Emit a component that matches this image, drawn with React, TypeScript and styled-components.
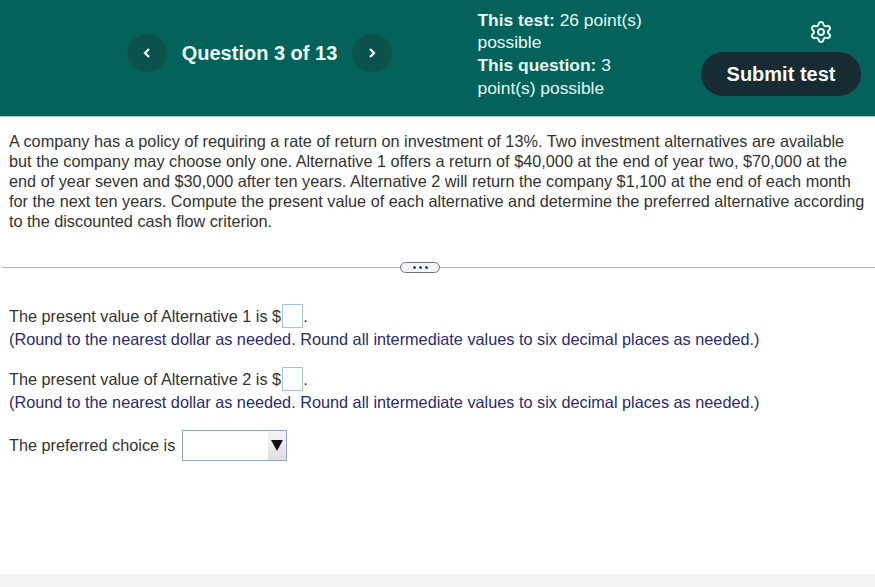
import React from "react";
import styled, { createGlobalStyle } from "styled-components";
import { Settings } from "lucide-react";

const Global = createGlobalStyle`
  html, body { margin: 0; padding: 0; background: #fff; }
  body { font-family: "Liberation Sans", Arial, sans-serif; }
`;
const Page = styled.div`
  width: 875px; height: 587px; position: relative; overflow: hidden;
  display: flex; flex-direction: column; background: #fff;
`;
const Header = styled.header`
  height: 116px; flex: none; background: #03635a; color: #fff;
  border-bottom: 1px solid #9fc9c3; box-sizing: content-box;
  display: flex; align-items: flex-start;
`;
const Nav = styled.div`
  display: flex; align-items: center; margin: 34px 0 0 127px; width: 350.5px;
`;
const RoundBtn = styled.div`
  width: 40px; height: 38px; border-radius: 50%; background: #0c524c; color: #eefaf7;
  display: flex; align-items: center; justify-content: center; flex: none;
`;
const NavTitle = styled.div`
  font-size: 20px; font-weight: 700; color: #eafaf7; width: 185px; text-align: center; white-space: nowrap;
  padding-top: 1px;
`;
const Points = styled.div`
  margin-top: 8.5px; width: 190px; font-size: 17.4px; line-height: 22.7px; color: #e6f8f4;
  b { font-weight: 700; }
`;
const Right = styled.div`
  margin-left: 33.5px; width: 160px; display: flex; flex-direction: column; align-items: flex-end;
`;
const Gear = styled.div`
  margin: 20px 28px 0 0; height: 24px; color: #e8f8f5; display: flex;
`;
const Submit = styled.div`
  margin-top: 8px; width: 160px; height: 44px; border-radius: 22px; background: #172b33; color: #f5f8f8;
  font-size: 20px; font-weight: 700; display: flex; align-items: center; justify-content: center;
`;
const Prompt = styled.p`
  margin: 14px 0 0 9px; width: 862px; font-size: 16.28px; line-height: 20.1px; color: #333;
`;
const Divider = styled.div`
  position: relative; margin-top: 35.5px; margin-left: 2px; height: 1px; background: #b4b4b4;
`;
const Dots = styled.div`
  position: absolute; left: 398px; top: -5px; width: 40px; height: 11px; box-sizing: border-box;
  border: 1px solid #6f7478; border-radius: 6px; background: #f2f4f8;
  display: flex; align-items: center; justify-content: center; gap: 3px;
  i { width: 3px; height: 3px; background: #3f4650; border-radius: 50%; display: block; }
`;
const Answers = styled.div`
  margin: 36.5px 0 0 9px; display: flex; flex-direction: column;
`;
const Block = styled.div`
  display: flex; flex-direction: column; margin-bottom: 16px;
`;
const Line = styled.div`
  display: flex; align-items: center; height: 24px; font-size: 16.28px; color: #333; white-space: nowrap;
`;
const Note = styled.div`
  height: 23px; line-height: 23px; font-size: 16.28px; color: #2a2b70; white-space: nowrap;
`;
const Box = styled.span`
  display: inline-block; width: 21px; height: 24px; box-sizing: border-box; margin-left: 1px;
  border: 1px solid #a9c3dc; background: #fff;
`;
const SelectLine = styled(Line)`
  height: 32px; margin-top: -1px;
`;
const Select = styled.div`
  width: 105px; height: 31px; margin-left: 7px; box-sizing: border-box; border: 1px solid #8ea6cf;
  display: flex; justify-content: flex-end; background: #fff;
`;
const Arrow = styled.div`
  width: 18px; background: linear-gradient(#f6f6f6, #dedede); display: flex; align-items: center; justify-content: center;
`;
const Footer = styled.div`
  position: absolute; left: 0; right: 0; bottom: 0; height: 13px; background: #f3f3f3;
`;

export default function App() {
  return (
    <Page>
      <Global />
      <Header>
        <Nav>
          <RoundBtn>
            <svg width="10" height="12" viewBox="0 0 10 12" fill="none" stroke="currentColor" strokeWidth="2.2"><path d="M7 2 L3 6 L7 10" /></svg>
          </RoundBtn>
          <NavTitle>Question 3 of 13</NavTitle>
          <RoundBtn>
            <svg width="10" height="12" viewBox="0 0 10 12" fill="none" stroke="currentColor" strokeWidth="2.2"><path d="M3 2 L7 6 L3 10" /></svg>
          </RoundBtn>
        </Nav>
        <Points>
          <b>This test:</b> 26 point(s)<br />
          possible<br />
          <b>This question:</b> 3<br />
          point(s) possible
        </Points>
        <Right>
          <Gear>
            <Settings size={24} strokeWidth={2} />
          </Gear>
          <Submit>Submit test</Submit>
        </Right>
      </Header>
      <Prompt>
        A company has a policy of requiring a rate of return on investment of 13%. Two investment alternatives are available but the company may choose only one. Alternative 1 offers a return of $40,000 at the end of year two, $70,000 at the end of year seven and $30,000 after ten years. Alternative 2 will return the company $1,100 at the end of each month for the next ten years. Compute the present value of each alternative and determine the preferred alternative according to the discounted cash flow criterion.
      </Prompt>
      <Divider>
        <Dots><i /><i /><i /></Dots>
      </Divider>
      <Answers>
        <Block>
          <Line>The present value of Alternative 1 is $<Box />.</Line>
          <Note>(Round to the nearest dollar as needed. Round all intermediate values to six decimal places as needed.)</Note>
        </Block>
        <Block>
          <Line>The present value of Alternative 2 is $<Box />.</Line>
          <Note>(Round to the nearest dollar as needed. Round all intermediate values to six decimal places as needed.)</Note>
        </Block>
        <SelectLine>
          The preferred choice is
          <Select>
            <Arrow>
              <svg width="14" height="14" viewBox="0 0 14 14"><path d="M1 2 H13 L7 13 Z" fill="#111" /></svg>
            </Arrow>
          </Select>
        </SelectLine>
      </Answers>
      <Footer />
    </Page>
  );
}
